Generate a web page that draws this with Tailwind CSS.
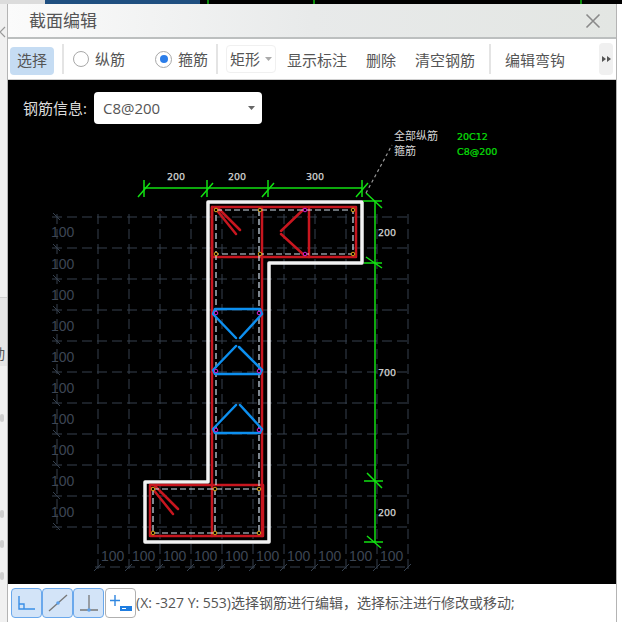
<!DOCTYPE html>
<html lang="zh">
<head>
<meta charset="utf-8">
<script src="https://cdn.jsdelivr.net/npm/@tailwindcss/browser@4"></script>
</head>
<body class="w-[622px] h-[622px] overflow-hidden bg-white font-['Open_Sans','Noto_Sans_CJK_SC',sans-serif]">
<div class="flex flex-col w-[622px] h-[622px]">
  <!-- strip of the application behind the dialog -->
  <div class="flex h-[4px] shrink-0 bg-black">
    <div class="w-[45px] bg-[#dcdcdc]"></div>
    <div class="w-[155px] bg-[#1f4f80]"></div>
    <div class="w-[7px]"></div>
    <div class="w-[2px] bg-[#0a8a0a]"></div>
    <div class="w-[104px]"></div>
    <div class="w-[2px] bg-[#0a8a0a]"></div>
    <div class="w-[265px]"></div>
    <div class="w-[2px] bg-[#0a8a0a]"></div>
  </div>
  <div class="flex flex-1 min-h-0">
    <!-- left sliver of the application -->
    <div class="flex flex-col w-[7px] shrink-0 overflow-hidden bg-[#f1f1f1] text-[#888]">
      <div class="h-[293px] bg-[#f0f0f0] flex flex-col">
        <svg class="mt-[22px]" width="6" height="12" viewBox="0 0 6 12" fill="none" stroke="#999" stroke-width="1.2"><path d="M5 1L0 6L5 11"/></svg>
      </div>
      <div class="h-[1px] bg-[#d0d0d0]"></div>
      <div class="h-[68px] bg-[#e6e6e6] flex items-end"><span class="ml-[-9px] mb-[5px] text-[14px] leading-none text-[#555]">动</span></div>
      <div class="h-[48px]"></div>
      <div class="h-[8px] w-[4px] rounded-full bg-[#cfcfcf]"></div>
      <div class="h-[88px]"></div>
      <div class="h-[8px] w-[4px] rounded-full bg-[#cfcfcf]"></div>
      <div class="h-[22px]"></div>
      <div class="h-[8px] w-[4px] rounded-full bg-[#cfcfcf]"></div>
      <div class="h-[24px]"></div>
      <div class="h-[8px] w-[4px] rounded-full bg-[#cfcfcf]"></div>
    </div>
    <!-- dialog -->
    <div class="flex flex-col w-[610px] h-[618px] border-l border-r border-[#b4b4b4] bg-white">
      <div class="flex items-center justify-between h-[33px] shrink-0 pl-[21px] pr-[15px] border-b-2 border-[#bcbfbf] box-content bg-gradient-to-r from-[#fbfbfb] via-[#e8eaea] to-[#e3e6e3]">
        <span class="text-[17px] leading-none text-[#555]">截面编辑</span>
        <svg width="16" height="16" viewBox="0 0 16 16" fill="none" stroke="#8a8a8a" stroke-width="1.6"><path d="M1.5 1.5L14.5 14.5M14.5 1.5L1.5 14.5"/></svg>
      </div>
      <!-- toolbar -->
      <div class="flex items-center h-[41px] shrink-0 text-[15px] leading-none text-[#555] bg-white border-b border-[#d0d0d0]">
        <button class="ml-[2px] w-[44px] h-[28px] mt-[3px] rounded-[4px] bg-[#c5dcf3] text-[#555]">选择</button>
        <div class="ml-[8px] w-[2px] h-[30px] bg-[#e4e4e4]"></div>
        <div class="ml-[9px] flex items-center gap-[6px]">
          <span class="w-[16px] h-[16px] rounded-full border-[1.5px] border-[#a8a8a8] bg-white"></span>
          <span>纵筋</span>
        </div>
        <div class="ml-[30px] flex items-center gap-[6px]">
          <span class="flex items-center justify-center w-[17px] h-[17px] rounded-full border-[1.5px] border-[#a8a8a8] bg-white"><span class="w-[8px] h-[8px] rounded-full bg-[#2b7de9]"></span></span>
          <span>箍筋</span>
        </div>
        <div class="ml-[8px] w-[2px] h-[30px] bg-[#e4e4e4]"></div>
        <div class="ml-[8px] flex items-center w-[50px] h-[28px] pl-[3px] rounded-[4px] border border-[#f0f0f0]">
          <span>矩形</span>
          <svg class="ml-[5px]" width="7" height="4" viewBox="0 0 7 4" fill="#aaa"><path d="M0 0H7L3.5 4Z"/></svg>
        </div>
        <span class="ml-[11px] mt-[3px]">显示标注</span>
        <span class="ml-[19px] mt-[3px]">删除</span>
        <span class="ml-[19px] mt-[3px]">清空钢筋</span>
        <div class="ml-[14px] w-[2px] h-[30px] bg-[#e4e4e4]"></div>
        <span class="ml-[14px] mt-[3px]">编辑弯钩</span>
        <div class="flex items-center justify-center ml-[34px] w-[14px] h-[32px] rounded-[4px] bg-[#f0f0f0]">
          <svg width="9" height="6" viewBox="0 0 9 6" fill="#555"><path d="M0 0L4 3L0 6ZM5 0L9 3L5 6Z"/></svg>
        </div>
      </div>
      <!-- canvas -->
      <div class="relative h-[504px] shrink-0 bg-black">
        <svg class="absolute inset-0" width="608" height="504" viewBox="8 80 608 504" fill="none">
          <!-- grid -->
          <g stroke="#36414f" stroke-width="1" stroke-dasharray="10 5">
            <path d="M52 217H408M52 248H408M52 279H408M52 310H408M52 341H408M52 372H408M52 403H408M52 434H408M52 465H408M52 496H408M52 527H408M95 567H408"/>
            <path d="M57 214V530M98 214V570M129 214V570M160 214V570M191 214V570M222 214V570M253 214V570M284 214V570M315 214V570M346 214V570M377 214V570M408 214V570"/>
          </g>
          <g stroke="#36414f" stroke-width="1">
            <path d="M53 213L60 220M53 244L60 251M53 275L60 282M53 306L60 313M53 337L60 344M53 368L60 375M53 399L60 406M53 430L60 437M53 461L60 468M53 492L60 499M53 523L60 530"/>
            <path d="M94 571L101 564M125 571L132 564M156 571L163 564M187 571L194 564M218 571L225 564M249 571L256 564M280 571L287 564M311 571L318 564M342 571L349 564M373 571L380 564M404 571L411 564"/>
          </g>
          <g fill="#3d4654" font-family="Liberation Sans" font-size="14">
            <text x="51" y="237">100</text><text x="51" y="269">100</text><text x="51" y="300">100</text><text x="51" y="331">100</text><text x="51" y="362">100</text><text x="51" y="393">100</text><text x="51" y="424">100</text><text x="51" y="455">100</text><text x="51" y="486">100</text><text x="51" y="517">100</text>
            <text x="101" y="561">100</text><text x="132" y="561">100</text><text x="163" y="561">100</text><text x="194" y="561">100</text><text x="225" y="561">100</text><text x="256" y="561">100</text><text x="287" y="561">100</text><text x="318" y="561">100</text><text x="349" y="561">100</text><text x="380" y="561">100</text>
          </g>
          <!-- section outline -->
          <path d="M208 202H362V263H269V542H145V482H208Z" stroke="#f2f2f2" stroke-width="3.5" stroke-linejoin="round"/>
          <!-- red stirrups -->
          <g stroke="#c8161f" stroke-width="2.5" stroke-linejoin="round" stroke-linecap="round">
            <path d="M212 207H356V257H212Z"/>
            <path d="M212 207V536M262 207V536"/>
            <path d="M150 485H263V536H150Z"/>
            <path d="M215 208L236 234M218 208L240 230M152 488L173 514M155 486L178 509"/>
            <path d="M309 207V257M305 208L281 231M281 234L305 256"/>
          </g>
          <!-- dashed inner outline -->
          <g stroke="#d4e2ee" stroke-width="1.2" stroke-dasharray="6 3">
            <path d="M216 210H353V254H216Z"/>
            <path d="M216 254V489M259 210V533"/>
            <path d="M153 489H259M153 533H259M153 489V533M215 489V533"/>
          </g>
          <!-- blue ties -->
          <g stroke="#0d8fef" stroke-width="2.5" stroke-linejoin="round" stroke-linecap="round">
            <path d="M236 338L213 314L215 309H260L262 314L240 338"/>
            <path d="M236 346L213 370L215 374H260L262 370L239 347"/>
            <path d="M236 405L213 429L215 433H260L262 429L240 405"/>
          </g>
          <!-- bars -->
          <g stroke="#d9a81c" stroke-width="1" fill="#000">
            <circle cx="216" cy="210" r="1.8"/><circle cx="260" cy="210" r="1.8"/><circle cx="353" cy="210" r="1.8"/><circle cx="216" cy="254" r="1.8"/><circle cx="260" cy="254" r="1.8"/><circle cx="353" cy="254" r="1.8"/>
            <circle cx="153" cy="489" r="1.8"/><circle cx="215" cy="489" r="1.8"/><circle cx="259" cy="489" r="1.8"/><circle cx="153" cy="533" r="1.8"/><circle cx="215" cy="533" r="1.8"/><circle cx="259" cy="533" r="1.8"/>
          </g>
          <g stroke="#d41ed4" stroke-width="1" fill="#000">
            <circle cx="305" cy="210" r="1.8"/><circle cx="305" cy="254" r="1.8"/>
            <circle cx="216" cy="313" r="1.8"/><circle cx="259" cy="313" r="1.8"/><circle cx="216" cy="371" r="1.8"/><circle cx="259" cy="371" r="1.8"/><circle cx="216" cy="430" r="1.8"/><circle cx="259" cy="430" r="1.8"/>
          </g>
          <!-- dimensions -->
          <g stroke="#12e012" stroke-width="1.5">
            <path d="M144 188H362M144 180V197M207 180V197M268 180V197M362 180V197"/>
            <path d="M138 197L150 183M201 197L213 183M262 197L274 183M356 197L368 183"/>
            <path d="M375 201V542M363 201H382M364 263H382M364 481H383M364 542H383"/>
            <path d="M366 193L382 208M366 257L382 268M367 473L382 488M367 536L381 548"/>
          </g>
          <path d="M366 193L392 145" stroke="#999" stroke-width="1.2" stroke-dasharray="3 3"/>
          <g fill="#d4d4d4" stroke="#d4d4d4" stroke-width="0.25" font-family="DejaVu Sans" font-size="9.5">
            <text x="167" y="180">200</text><text x="228" y="180">200</text><text x="306" y="180">300</text>
            <text x="378" y="236">200</text><text x="378" y="376">700</text><text x="378" y="516">200</text>
          </g>
          <g fill="#d4d4d4" font-family="Noto Sans CJK SC" font-size="11">
            <text x="394" y="140">全部纵筋</text><text x="394" y="155">箍筋</text>
          </g>
          <g fill="#08e008" stroke="#08e008" stroke-width="0.2" font-family="DejaVu Sans" font-size="9.5">
            <text x="457" y="140">20C12</text><text x="457" y="155">C8@200</text>
          </g>
        </svg>
        <div class="relative flex items-center pt-[12px] pl-[15px]">
          <span class="text-[15px] leading-none text-[#dcdcdc]">钢筋信息:</span>
          <div class="flex items-center justify-between ml-[7px] w-[168px] h-[32px] pl-[9px] pr-[7px] rounded-[4px] bg-white text-[15px] leading-none text-[#555]">
            <span>C8@200</span>
            <svg width="7" height="4" viewBox="0 0 7 4" fill="#666"><path d="M0 0H7L3.5 4Z"/></svg>
          </div>
        </div>
      </div>
      <!-- status bar -->
      <div class="flex items-center h-[38px] shrink-0 pl-[3px] text-[14px] leading-none text-[#555] bg-white">
        <button class="flex items-center justify-center w-[31px] h-[30px] rounded-[4px] border-[1.5px] border-[#6aa8ec] bg-[#d3e4f8]">
          <svg width="20" height="18" viewBox="0 0 20 18" fill="none" stroke="#3a8ee6" stroke-width="1.4"><path d="M2 2V15H18M2 10H7V15"/></svg>
        </button>
        <button class="flex items-center justify-center w-[31px] h-[30px] rounded-[4px] border-[1.5px] border-[#6aa8ec] bg-[#d3e4f8]">
          <svg width="20" height="18" viewBox="0 0 20 18" fill="none"><path d="M1 17L19 1" stroke="#777" stroke-width="1.3"/><circle cx="10" cy="9" r="1.8" fill="#5ca0ea"/></svg>
        </button>
        <button class="flex items-center justify-center w-[31px] h-[30px] rounded-[4px] border-[1.5px] border-[#6aa8ec] bg-[#d3e4f8]">
          <svg width="20" height="18" viewBox="0 0 20 18" fill="none"><path d="M10 1V16M1 16H19" stroke="#777" stroke-width="1.3"/><circle cx="10" cy="16" r="1.8" fill="#5ca0ea"/></svg>
        </button>
        <button class="flex items-center justify-center ml-[1px] w-[31px] h-[30px] rounded-[4px] border-[1.5px] border-[#b0b0b0] bg-white">
          <svg width="24" height="20" viewBox="0 0 24 20" fill="none"><path d="M6 2V13M1 7.5H11" stroke="#2f86e0" stroke-width="1.4"/><rect x="11" y="13" width="12" height="5" fill="#1f7de0"/><path d="M13 15.5H17" stroke="#fff" stroke-width="1"/></svg>
        </button>
        <span class="whitespace-nowrap">(X: -327 Y: 553)选择钢筋进行编辑，选择标注进行修改或移动;</span>
      </div>
    </div>
    <div class="flex-1 bg-white"></div>
  </div>
</div>
</body>
</html>
